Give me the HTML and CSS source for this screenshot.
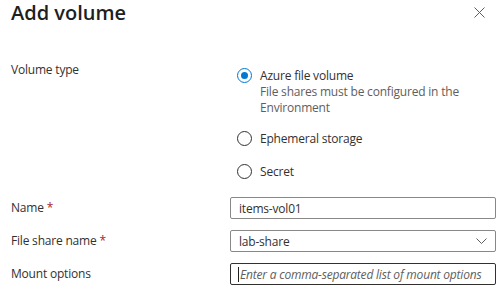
FILE: index.html
```html
<!DOCTYPE html>
<html lang="en">
<head>
  <meta charset="UTF-8" />
  <title>Add volume</title>
  <link rel="stylesheet" href="styles.css">
</head>
<body>

<div class="panel">
  <header class="panel-head">
    <h1>Add volume</h1>
    <button class="close" aria-label="Close">
      <svg width="11" height="11" viewBox="0 0 11 11"><path d="M0.5 0.5 L10.5 10.5 M10.5 0.5 L0.5 10.5" stroke="#605e5c" stroke-width="1" fill="none"/></svg>
    </button>
  </header>

  <div class="row row-type">
    <div class="label">Volume type</div>
    <div class="radios">
      <label class="radio checked">
        <span class="dot"></span>
        <span class="radio-text">
          Azure file volume
          <span class="hint">File shares must be configured in the<br>Environment</span>
        </span>
      </label>
      <label class="radio">
        <span class="dot"></span>
        <span class="radio-text">Ephemeral storage</span>
      </label>
      <label class="radio">
        <span class="dot"></span>
        <span class="radio-text">Secret</span>
      </label>
    </div>
  </div>

  <div class="row">
    <div class="label">Name <span class="req">*</span></div>
    <div class="field">items-vol01</div>
  </div>

  <div class="row">
    <div class="label">File share name <span class="req">*</span></div>
    <div class="field select">
      lab-share
      <svg class="chev" width="11" height="6" viewBox="0 0 11 6"><path d="M0.5 0.5 L5.5 5.5 L10.5 0.5" stroke="#605e5c" fill="none"/></svg>
    </div>
  </div>

  <div class="row">
    <div class="label">Mount options</div>
    <div class="field focus"><span class="caret"></span><span class="placeholder">Enter a comma-separated list of mount options</span></div>
  </div>
</div>

</body>
</html>
```

FILE: styles.css
```css
* {
  box-sizing: border-box;
}

body {
  margin: 0;
  background: #fff;
  font-family: 'Open Sans', 'Noto Sans', sans-serif;
  font-size: 12px;
  letter-spacing: -0.2px;
  color: #323130;
}

.panel {
  padding: 0 8px 0 11px;
}

.panel-head {
  display: flex;
  justify-content: space-between;
  align-items: center;
  height: 25px;
}

.panel-head h1 {
  margin: 0;
  font-size: 20px;
  font-weight: 600;
  letter-spacing: 0;
  color: #201f1e;
}

.close {
  border: none;
  background: none;
  padding: 0;
  margin-right: 11px;
  display: flex;
}

.row {
  display: grid;
  grid-template-columns: 219px 1fr;
  align-items: center;
  margin-top: 11px;
}

.row-type {
  align-items: start;
  margin-top: 37px;
  margin-bottom: 17px;
}

.label {
  line-height: 16px;
}

.req {
  color: #a4262c;
}

.radios {
  display: flex;
  flex-direction: column;
  gap: 17px;
  padding-left: 7px;
  padding-top: 6px;
}

.radio {
  display: flex;
  align-items: flex-start;
  gap: 8px;
}

.radio.checked {
  margin-bottom: -2px;
}

.dot {
  width: 15px;
  height: 15px;
  border-radius: 50%;
  border: 1px solid #323130;
  flex: none;
  position: relative;
}

.radio.checked .dot {
  border-color: #0078d4;
}

.radio.checked .dot::after {
  content: "";
  position: absolute;
  left: 3px;
  top: 3px;
  width: 7px;
  height: 7px;
  border-radius: 50%;
  background: #0078d4;
}

.radio-text {
  line-height: 16px;
  padding-top: 0;
}

.hint {
  display: block;
  color: #605e5c;
  white-space: nowrap;
}

.field {
  height: 22px;
  border: 1px solid #8a8886;
  border-radius: 2px;
  padding: 0 8px;
  display: flex;
  align-items: center;
  white-space: nowrap;
  overflow: hidden;
}

.select {
  justify-content: space-between;
}

.focus {
  border-color: #323130;
  padding-left: 7px;
}

.caret {
  width: 1px;
  height: 15px;
  background: #201f1e;
  margin-right: 1px;
  flex: none;
}

.placeholder {
  font-style: italic;
  color: #605e5c;
}
```
